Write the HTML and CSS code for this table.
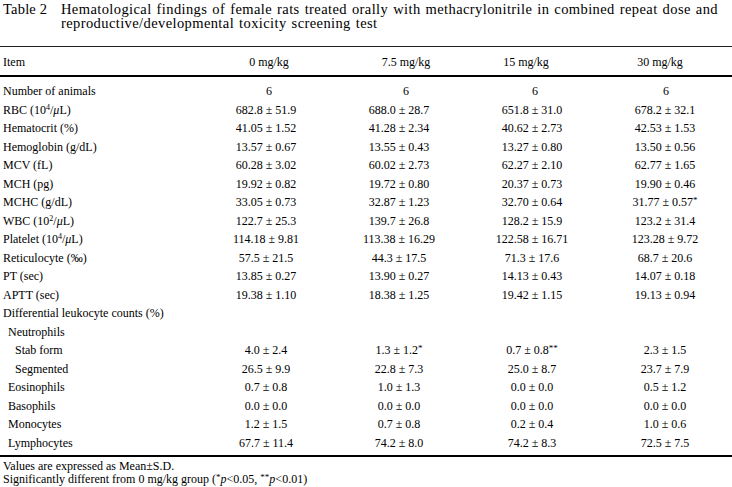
FILE: index.html
```html
<!DOCTYPE html>
<html lang="en">
<head>
<meta charset="utf-8">
<title>Table 2</title>
<link rel="stylesheet" href="styles.css">
</head>
<body>
<div class="caption">
  <div class="label">Table 2</div>
  <div class="text">Hematological findings of female rats treated orally with methacrylonitrile in combined repeat dose and reproductive/developmental toxicity screening test</div>
</div>
<table class="data">
  <colgroup>
    <col class="c-item"><col class="c-val"><col class="c-val2"><col class="c-val"><col class="c-val2">
  </colgroup>
  <thead>
    <tr>
      <th class="item">Item</th>
      <th class="h0">0 mg/kg</th>
      <th class="h1">7.5 mg/kg</th>
      <th class="h2">15 mg/kg</th>
      <th class="h3">30 mg/kg</th>
    </tr>
  </thead>
  <tbody>
    <tr class="first"><td class="item">Number of animals</td><td class="n0">6</td><td class="n1">6</td><td class="n2">6</td><td class="n3">6</td></tr>
    <tr><td class="item">RBC (10<sup>4</sup>/<i>μ</i>L)</td><td>682.8 ± 51.9</td><td>688.0 ± 28.7</td><td>651.8 ± 31.0</td><td>678.2 ± 32.1</td></tr>
    <tr><td class="item">Hematocrit (%)</td><td>41.05 ± 1.52</td><td>41.28 ± 2.34</td><td>40.62 ± 2.73</td><td>42.53 ± 1.53</td></tr>
    <tr><td class="item">Hemoglobin (g/dL)</td><td>13.57 ± 0.67</td><td>13.55 ± 0.43</td><td>13.27 ± 0.80</td><td>13.50 ± 0.56</td></tr>
    <tr><td class="item">MCV (fL)</td><td>60.28 ± 3.02</td><td>60.02 ± 2.73</td><td>62.27 ± 2.10</td><td>62.77 ± 1.65</td></tr>
    <tr><td class="item">MCH (pg)</td><td>19.92 ± 0.82</td><td>19.72 ± 0.80</td><td>20.37 ± 0.73</td><td>19.90 ± 0.46</td></tr>
    <tr><td class="item">MCHC (g/dL)</td><td>33.05 ± 0.73</td><td>32.87 ± 1.23</td><td>32.70 ± 0.64</td><td>31.77 ± 0.57<span class="sig">*</span></td></tr>
    <tr><td class="item">WBC (10<sup>2</sup>/<i>μ</i>L)</td><td>122.7 ± 25.3</td><td>139.7 ± 26.8</td><td>128.2 ± 15.9</td><td>123.2 ± 31.4</td></tr>
    <tr><td class="item">Platelet (10<sup>4</sup>/<i>μ</i>L)</td><td>114.18 ± 9.81</td><td>113.38 ± 16.29</td><td>122.58 ± 16.71</td><td>123.28 ± 9.72</td></tr>
    <tr><td class="item">Reticulocyte (‰)</td><td>57.5 ± 21.5</td><td>44.3 ± 17.5</td><td>71.3 ± 17.6</td><td>68.7 ± 20.6</td></tr>
    <tr><td class="item">PT (sec)</td><td>13.85 ± 0.27</td><td>13.90 ± 0.27</td><td>14.13 ± 0.43</td><td>14.07 ± 0.18</td></tr>
    <tr><td class="item">APTT (sec)</td><td>19.38 ± 1.10</td><td>18.38 ± 1.25</td><td>19.42 ± 1.15</td><td>19.13 ± 0.94</td></tr>
    <tr><td class="item">Differential leukocyte counts (%)</td><td></td><td></td><td></td><td></td></tr>
    <tr><td class="item ind1">Neutrophils</td><td></td><td></td><td></td><td></td></tr>
    <tr><td class="item ind2">Stab form</td><td>4.0 ± 2.4</td><td>1.3 ± 1.2<span class="sig">*</span></td><td>0.7 ± 0.8<span class="sig">**</span></td><td>2.3 ± 1.5</td></tr>
    <tr><td class="item ind2">Segmented</td><td>26.5 ± 9.9</td><td>22.8 ± 7.3</td><td>25.0 ± 8.7</td><td>23.7 ± 7.9</td></tr>
    <tr><td class="item ind1">Eosinophils</td><td>0.7 ± 0.8</td><td>1.0 ± 1.3</td><td>0.0 ± 0.0</td><td>0.5 ± 1.2</td></tr>
    <tr><td class="item ind1">Basophils</td><td>0.0 ± 0.0</td><td>0.0 ± 0.0</td><td>0.0 ± 0.0</td><td>0.0 ± 0.0</td></tr>
    <tr><td class="item ind1">Monocytes</td><td>1.2 ± 1.5</td><td>0.7 ± 0.8</td><td>0.2 ± 0.4</td><td>1.0 ± 0.6</td></tr>
    <tr class="last"><td class="item ind1">Lymphocytes</td><td>67.7 ± 11.4</td><td>74.2 ± 8.0</td><td>74.2 ± 8.3</td><td>72.5 ± 7.5</td></tr>
  </tbody>
</table>
<div class="notes">
  <p>Values are expressed as Mean±S.D.</p>
  <p>Significantly different from 0 mg/kg group (<span class="sig">*</span><i>p</i>&lt;0.05, <span class="sig">**</span><i>p</i>&lt;0.01)</p>
</div>
</body>
</html>
```

FILE: styles.css
```css
html, body {
  margin: 0;
  padding: 0;
  background: #ffffff;
}

body {
  width: 732px;
  font-family: "Liberation Serif", "Times New Roman", serif;
  color: #000;
  font-size: 12px;
}

.caption {
  display: grid;
  grid-template-columns: 58px 1fr;
  padding: 3px 0 0 3px;
  font-size: 14.5px;
  line-height: 13.5px;
  height: 46px;
  box-sizing: border-box;
}

.caption .label {
  white-space: nowrap;
  letter-spacing: 0.2px;
}

.caption .text {
  letter-spacing: 0.4px;
  word-spacing: 1px;
}

.data {
  width: 732px;
  border-collapse: collapse;
  table-layout: fixed;
  border-top: 1.5px solid #222;
  border-bottom: 2px solid #000;
}

.c-item { width: 200px; }
.c-val { width: 132px; }
.c-val2 { width: 134px; }

.data th {
  font-weight: normal;
  height: 27px;
  padding: 0;
  padding-top: 1px;
  text-align: center;
  border-bottom: 2px solid #000;
  line-height: 26px;
  white-space: nowrap;
}

.data th.item { text-align: left; padding-left: 3px; }
.data th.h0 { padding-left: 6px; }
.data th.h1 { padding-left: 14px; }
.data th.h2 { padding-right: 12px; }
.data th.h3 { padding-right: 10px; }

.data td {
  padding: 0;
  height: 18.5px;
  line-height: 18.5px;
  text-align: center;
  white-space: nowrap;
}

.data td.item {
  text-align: left;
  padding-left: 3px;
}

.data td.ind1 { padding-left: 8px; }
.data td.ind2 { padding-left: 15px; }

.data tr.first td { padding-top: 5px; }
.data tr.last td { padding-bottom: 3px; }

.data td.n0 { padding-left: 6px; }
.data td.n1 { padding-left: 14px; }
.data td.n2 { padding-left: 6px; }
.data td.n3 { padding-left: 2px; }

.data sup {
  font-size: 8px;
  line-height: 0;
  vertical-align: 4px;
}

.sig {
  font-size: 9px;
  vertical-align: 3px;
  line-height: 0;
}

.notes {
  padding: 3px 0 0 3px;
  line-height: 13px;
}

.notes p {
  margin: 0;
}
```
